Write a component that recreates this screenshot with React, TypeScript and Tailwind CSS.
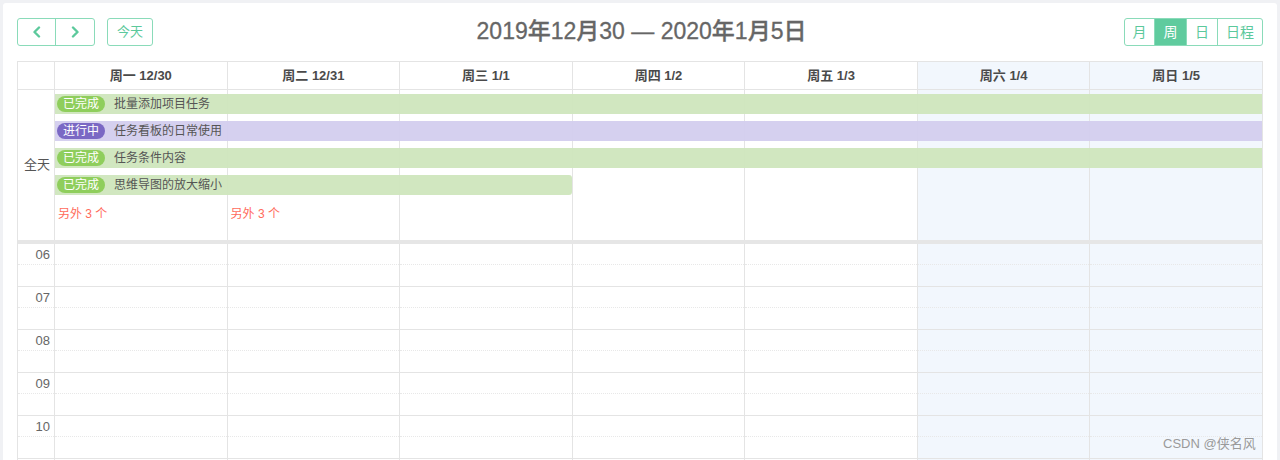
import React from "react";

const days = ["周一 12/30", "周二 12/31", "周三 1/1", "周四 1/2", "周五 1/3", "周六 1/4", "周日 1/5"];
const hours = ["06", "07", "08", "09", "10", ""];

const font = { fontFamily: '"Liberation Sans", "Noto Sans CJK SC", sans-serif' };

function Chevron({ dir }: { dir: "l" | "r" }) {
  return (
    <svg width="10" height="12" viewBox="0 0 10 12" fill="none">
      <path
        d={dir === "l" ? "M7 1.5 L2.5 6 L7 10.5" : "M3 1.5 L7.5 6 L3 10.5"}
        stroke="#5cc99c"
        strokeWidth="2.4"
        strokeLinecap="round"
        strokeLinejoin="round"
      />
    </svg>
  );
}

type Ev = { status: string; title: string; span: string; color: "green" | "purple" };
const events: Ev[] = [
  { status: "已完成", title: "批量添加项目任务", span: "col-start-2 col-end-9", color: "green" },
  { status: "进行中", title: "任务看板的日常使用", span: "col-start-2 col-end-9", color: "purple" },
  { status: "已完成", title: "任务条件内容", span: "col-start-2 col-end-9", color: "green" },
  { status: "已完成", title: "思维导图的放大缩小", span: "col-start-2 col-end-5", color: "green" },
];

export default function App() {
  return (
    <div className="w-[1280px] h-[460px] bg-[#f0f1f4] pt-[3px] px-[3px] overflow-hidden relative" style={font}>
      <div className="bg-white h-full rounded-t-[3px] px-[14px] pt-[14px]">
        {/* toolbar */}
        <div className="flex items-center justify-between h-[30px]">
          <div className="flex items-center gap-[12px]">
            <div className="flex h-[28px] border border-[#8adbb9] rounded-[3px]">
              <div className="w-[38px] flex items-center justify-center border-r border-[#8adbb9]">
                <Chevron dir="l" />
              </div>
              <div className="w-[38px] flex items-center justify-center">
                <Chevron dir="r" />
              </div>
            </div>
            <div className="h-[28px] w-[46px] border border-[#8adbb9] rounded-[3px] flex items-center justify-center text-[13px] text-[#5cc99c]">
              今天
            </div>
          </div>
          <div className="text-[23px] leading-[28px] text-[#666666] font-medium ml-[6px] -mt-[3px] [-webkit-text-stroke:0.3px_#666666]">
            2019年12月30 — 2020年1月5日
          </div>
          <div className="flex h-[28px] border border-[#8adbb9] rounded-[3px] text-[14px] text-[#5cc99c] overflow-hidden">
            <div className="w-[30px] flex items-center justify-center border-r border-[#8adbb9]">月</div>
            <div className="w-[31px] flex items-center justify-center bg-[#5fcb9e] text-white">周</div>
            <div className="w-[31px] flex items-center justify-center border-l border-[#8adbb9]">日</div>
            <div className="w-[45px] flex items-center justify-center border-l border-[#8adbb9]">日程</div>
          </div>
        </div>

        {/* calendar */}
        <div className="mt-[14px] w-[1246px] border-l border-t border-[#e4e4e4]">
          {/* header */}
          <div className="grid grid-cols-[37px_repeat(7,1fr)] h-[28px]">
            <div className="border-r border-b border-[#e4e4e4]" />
            {days.map((d, i) => (
              <div
                key={d}
                className={`border-r border-b border-[#e4e4e4] flex items-center justify-center text-[13px] font-semibold text-[#4a4a4a] ${i >= 5 ? "bg-[#f2f7fd]" : ""}`}
              >
                {d}
              </div>
            ))}
          </div>

          {/* all-day */}
          <div className="relative h-[154px] border-b-[4px] border-[#e6e6e6]">
            <div className="grid grid-cols-[37px_repeat(7,1fr)] h-full">
              <div className="border-r border-[#e4e4e4] flex items-center justify-end pr-[4px] text-[13px] text-[#555]">全天</div>
              {days.map((d, i) => (
                <div key={d} className={`border-r border-[#e4e4e4] ${i >= 5 ? "bg-[#f2f7fd]" : ""}`} />
              ))}
            </div>
            <div className="absolute inset-0 pt-[4px] grid grid-cols-[37px_repeat(7,1fr)] auto-rows-[20px] gap-y-[7px]">
              {events.map((e, i) => (
                <div
                  key={i}
                  className={`${e.span} mr-[1px] h-[20px] flex items-center ${
                    e.color === "green" ? "bg-[#cfe6bd]/95" : "bg-[#d3cdee]/95"
                  } ${i === 3 ? "rounded-r-[3px]" : ""}`}
                >
                  <span
                    className={`ml-[2px] h-[16px] px-[6px] rounded-full text-[12px] leading-[16px] text-white ${
                      e.color === "green" ? "bg-[#8fce5c]" : "bg-[#7a68c4]"
                    }`}
                  >
                    {e.status}
                  </span>
                  <span className="ml-[9px] text-[12px] text-[#555]">{e.title}</span>
                </div>
              ))}
              <div className="col-start-2 pl-[3px] pt-[3px] text-[12px] text-[#ff6b5c]">另外 3 个</div>
              <div className="col-start-3 pl-[3px] pt-[3px] text-[12px] text-[#ff6b5c]">另外 3 个</div>
            </div>
          </div>

          {/* time grid */}
          <div className="grid grid-cols-[37px_repeat(7,1fr)]">
            {hours.map((h, hi) => (
              <React.Fragment key={hi}>
                <div className="h-[43px] border-r border-b border-[#e4e4e4] flex flex-col">
                  <div className="h-[21px] border-b border-dotted border-[#e8e8e8] text-right pr-[4px] pt-[1px] text-[13px] text-[#666]">{h}</div>
                </div>
                {days.map((d, i) => (
                  <div key={d} className={`h-[43px] border-r border-b border-[#e4e4e4] ${i >= 5 ? "bg-[#f2f7fd]" : ""}`}>
                    <div className="h-[21px] border-b border-dotted border-[#e8e8e8]" />
                  </div>
                ))}
              </React.Fragment>
            ))}
          </div>
        </div>
      </div>
      <div className="absolute left-[1163px] top-[434px] text-[13px] text-[#9a9a9a]">CSDN @侠名风</div>
    </div>
  );
}
